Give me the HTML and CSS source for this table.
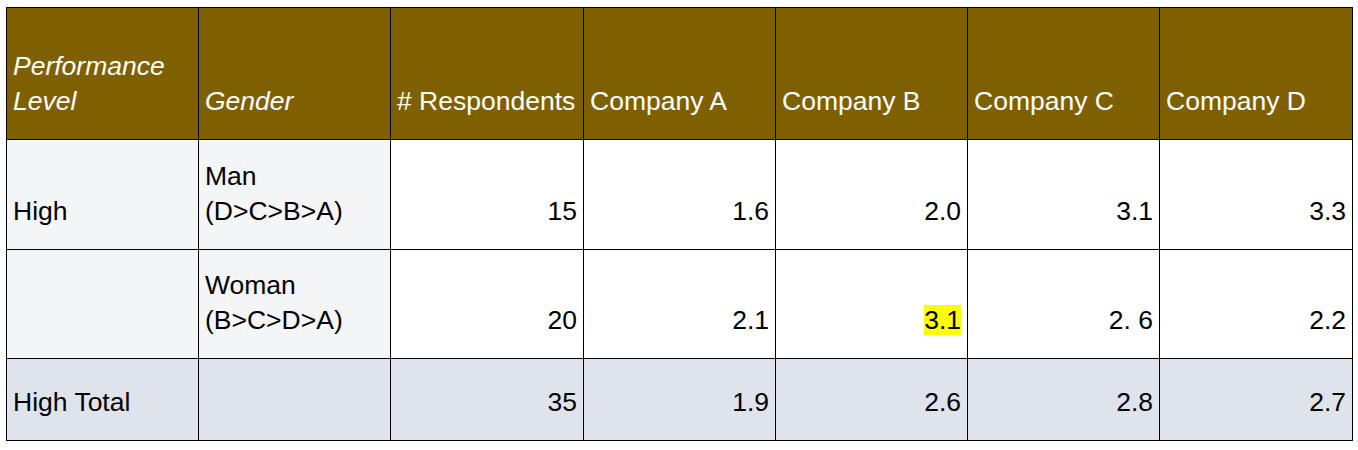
FILE: index.html
```html
<!DOCTYPE html>
<html>
<head>
<meta charset="utf-8">
<link rel="stylesheet" href="styles.css">
</head>
<body>
<div class="wrap">
<table class="perf">
  <colgroup>
    <col class="cw"><col class="cw"><col class="cw cx"><col class="cw"><col class="cw"><col class="cw"><col class="cw cx">
  </colgroup>
  <thead>
    <tr class="head">
      <th class="it">Performance<br>Level</th>
      <th class="it">Gender</th>
      <th># Respondents</th>
      <th>Company A</th>
      <th>Company B</th>
      <th>Company C</th>
      <th>Company D</th>
    </tr>
  </thead>
  <tbody>
    <tr class="r1">
      <td class="lab">High</td>
      <td class="lab">Man<br>(D&gt;C&gt;B&gt;A)</td>
      <td class="num">15</td>
      <td class="num">1.6</td>
      <td class="num">2.0</td>
      <td class="num">3.1</td>
      <td class="num">3.3</td>
    </tr>
    <tr class="r2">
      <td class="lab"></td>
      <td class="lab">Woman<br>(B&gt;C&gt;D&gt;A)</td>
      <td class="num">20</td>
      <td class="num">2.1</td>
      <td class="num"><span class="hl">3.1</span></td>
      <td class="num">2. 6</td>
      <td class="num">2.2</td>
    </tr>
    <tr class="total">
      <td>High Total</td>
      <td></td>
      <td class="num">35</td>
      <td class="num">1.9</td>
      <td class="num">2.6</td>
      <td class="num">2.8</td>
      <td class="num">2.7</td>
    </tr>
  </tbody>
</table>
</div>
</body>
</html>
```

FILE: styles.css
```css
html, body {
  margin: 0;
  padding: 0;
  background: #ffffff;
}
.wrap {
  padding: 7px 0 0 6px;
}
.perf {
  border-collapse: collapse;
  table-layout: fixed;
  width: 1347px;
  font-family: "Liberation Sans", Arial, sans-serif;
  font-size: 26.5px;
  line-height: 35px;
  color: #000000;
}
.perf col.cw { width: 192px; }
.perf col.cx { width: 193px; }
.perf th, .perf td {
  border: 1px solid #000000;
  padding: 0 6px 20px 6px;
  vertical-align: bottom;
  text-align: left;
  font-weight: normal;
  overflow: hidden;
  white-space: nowrap;
}
.perf th.it { font-style: italic; }
.head th {
  background: #7f6000;
  color: #ffffff;
  height: 132px;
  box-sizing: border-box;
}
.head th:nth-child(3) { padding-left: 6px; padding-right: 2px; }
.r1 td, .r2 td {
  background: #ffffff;
  height: 110px;
  box-sizing: border-box;
}
.r2 td { height: 109px; }
.r1 td.lab, .r2 td.lab { background: #f4f5f7; }
.total td {
  background: #dfe3ec;
  height: 82px;
  box-sizing: border-box;
}
.perf td.num { text-align: right; }
.hl {
  background: #ffff00;
  display: inline-block;
  line-height: 30px;
}
```
